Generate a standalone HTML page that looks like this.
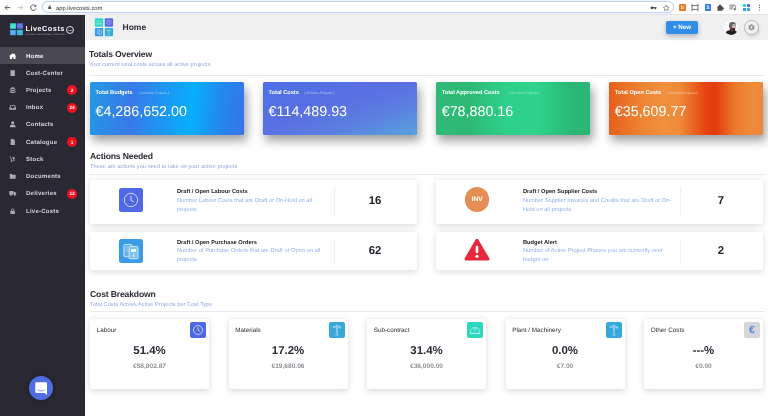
<!DOCTYPE html>
<html lang="en">
<head>
<meta charset="utf-8">
<title>LiveCosts - Home</title>
<style>
*{box-sizing:border-box;margin:0;padding:0}
html,body{width:768px;height:416px;overflow:hidden;background:#fff;font-family:"Liberation Sans",sans-serif;color:#2b2a35}
#wrap{position:absolute;left:0;top:0;width:768px;height:416px;will-change:transform;text-rendering:geometricPrecision}
.abs{position:absolute}
#chrome{position:absolute;left:0;top:0;width:768px;height:15px;background:#fff;border-bottom:1px solid #e4e4e6}
#url{position:absolute;left:42px;top:1px;width:632px;height:12px;border:.9px solid #bdd4f8;border-radius:6px;background:#fff;box-shadow:0 0 0 0.5px #e2ecfc}
#url span{position:absolute;left:13px;top:3.5px;font-size:5.85px;line-height:7px;color:#333;letter-spacing:0}
#side{position:absolute;left:0;top:15px;width:85px;height:401px;background:#2a2833}
#hdr{position:absolute;left:85px;top:15px;width:683px;height:25px;background:#f0f0f0}
.mi{position:absolute;left:0;width:85px;height:16.5px;color:#d2d2d9;font-size:6px;font-weight:bold;letter-spacing:.25px;line-height:19.7px;padding-left:26px}
.mi.on{background:#4a4952;color:#f4f4f7}
.mi svg{position:absolute;left:9.3px;top:5.2px;width:7.4px;height:6.5px;fill:#aaaab3}
.mi.on svg{fill:#fff;top:5.6px}
.mi.on{line-height:20.6px !important}
.bd{position:absolute;left:67px;top:3.5px;padding-top:1.5px;width:10px;height:10px;border-radius:50%;background:#f0101e;color:#fff;font-size:4.8px;line-height:10px;text-align:center;letter-spacing:-.1px}
h2{position:absolute;left:89px;font-size:8.6px;letter-spacing:-.15px;line-height:10px;margin-top:.4px;font-weight:bold;color:#2b2a35;white-space:nowrap}
.sub{position:absolute;left:89px;font-size:5.7px;line-height:6px;margin-top:1px;color:#8fa6dc;white-space:nowrap}
.hr{position:absolute;left:89px;width:676px;height:1px;background:#e9e9ec}
.tc{position:absolute;top:81.7px;width:153.9px;height:53px;border-radius:1.5px;box-shadow:2.5px 6px 9.5px rgba(10,10,15,.38);color:#fff}
.tc b{position:absolute;left:5.5px;top:8.45px;font-size:5.65px;line-height:7px;white-space:nowrap}
.tc i{position:absolute;top:9.15px;font-size:3.3px;line-height:4px;font-style:normal;opacity:.55;white-space:nowrap}
.tc em{position:absolute;left:5.5px;top:22.1px;font-size:14.3px;line-height:17px;font-style:normal;white-space:nowrap}
.ac{position:absolute;background:#fff;border-radius:2px;box-shadow:0 1.5px 6px rgba(20,20,30,.15)}
.ac .t{position:absolute;left:87px;margin-top:.87px;top:7.7px;font-size:5.7px;line-height:6px;font-weight:bold;color:#23222b;white-space:nowrap}
.ac .d{position:absolute;left:87px;margin-top:.9px;top:15.6px;width:152px;font-size:5.7px;line-height:9px;color:#8fb0e6}
.ac .v{position:absolute;left:244.3px;top:7px;width:1px;bottom:7px;background:#f0f0f3}
.ac .n{position:absolute;left:245px;width:80px;text-align:center;margin-top:.92px;top:13.5px;font-size:11.4px;line-height:13px;font-weight:bold;color:#23222b}
.cc{position:absolute;top:318.5px;width:119px;height:70.3px;background:#fff;border-radius:2px;box-shadow:0 1.5px 6px rgba(20,20,30,.16)}
.cc .l{position:absolute;left:6.7px;top:8.2px;font-size:6.3px;line-height:7px;color:#2b2a35;white-space:nowrap}
.cc .p{position:absolute;left:0;width:100%;text-align:center;top:26.3px;font-size:11.45px;line-height:13px;font-weight:bold;color:#2b2a35}
.cc .a{position:absolute;left:0;width:100%;text-align:center;top:45.5px;font-size:6.6px;line-height:6px;font-weight:bold;color:#8e8e96}
.cc .ic{position:absolute;left:100px;top:3.5px;width:16px;height:16px;border-radius:2px}
</style>
</head>
<body>
<div id="wrap">
<div id="chrome">
  <svg class="abs" style="left:0;top:0" width="42" height="15" viewBox="0 0 42 15">
    <path d="M10.2 7.6H5.3M7.4 5.3L5.1 7.6l2.3 2.3" stroke="#4a4a4f" stroke-width="0.9" fill="none"/>
    <path d="M17.6 7.6h4.9M20.4 5.3l2.3 2.3-2.3 2.3" stroke="#c2c2c6" stroke-width="0.9" fill="none"/>
    <path d="M35.6 6.2A2.7 2.7 0 1 0 35.9 8.6" stroke="#4a4a4f" stroke-width="0.9" fill="none"/>
    <path d="M36.3 4.5v2.2h-2.2z" fill="#4a4a4f"/>
  </svg>
  <div id="url">
    <svg class="abs" style="left:4.6px;top:3px" width="3.6" height="4.4" viewBox="0 0 5 6"><rect x="0.5" y="2.4" width="4" height="3.2" rx=".5" fill="#444"/><path d="M1.3 2.6V1.7a1.2 1.2 0 0 1 2.4 0v.9" stroke="#444" stroke-width=".7" fill="none"/></svg>
    <span>app.livecosts.com</span>
    <svg class="abs" style="left:603.5px;top:1px" width="30" height="10" viewBox="0 0 30 10">
      <circle cx="5" cy="4.8" r="1.4" fill="#444"/><rect x="5.5" y="4.2" width="4" height="1.2" fill="#444"/><rect x="8" y="5" width="1" height="1.3" fill="#444"/>
      <path d="M19.3 2l.9 1.9 2 .3-1.5 1.4.4 2-1.8-1-1.8 1 .4-2-1.5-1.4 2-.3z" stroke="#555" stroke-width=".6" fill="none"/>
    </svg>
  </div>
  <div class="abs" style="left:679px;top:4px;width:6.6px;height:7px;background:#f07a22;border-radius:1px;color:#fff;font-size:5px;line-height:8.4px;text-align:center;font-weight:bold">b</div>
  <svg class="abs" style="left:691px;top:3px" width="8" height="9" viewBox="0 0 8 9"><path d="M1 .8v7.4M7 .8v7.4M1 2.6h6M1 6.4h6" stroke="#50525a" stroke-width=".8" fill="none"/></svg>
  <div class="abs" style="left:704.5px;top:4px;width:6.8px;height:7px;background:#2b7de0;border-radius:1px;color:#fff;font-size:5px;line-height:8.6px;text-align:center;font-weight:bold">S</div>
  <svg class="abs" style="left:717px;top:4px" width="7" height="7" viewBox="0 0 7 7"><path d="M.5 2h1.6a1 1 0 1 1 1.8 0H5.5v1.6a1 1 0 1 1 0 1.8V6.8H.5z" fill="#4a4a50"/></svg>
  <svg class="abs" style="left:729px;top:4px" width="8" height="7" viewBox="0 0 8 7"><path d="M.5 1.2h5.5M.5 3h4M.5 4.8h3" stroke="#50525a" stroke-width=".8"/><circle cx="5.6" cy="5.2" r="1" fill="#50525a"/><path d="M6.4 5.2V1.5" stroke="#50525a" stroke-width=".6"/></svg>
  <div class="abs" style="left:743px;top:3.8px;width:3.4px;height:3.4px;border-radius:.6px;background:#2cdac6"></div><div class="abs" style="left:746.8px;top:3.8px;width:3.4px;height:3.4px;border-radius:.6px;background:#5868e6"></div><div class="abs" style="left:743px;top:7.6px;width:3.4px;height:3.4px;border-radius:.6px;background:#3a98e6"></div><div class="abs" style="left:746.8px;top:7.6px;width:3.4px;height:3.4px;border-radius:.6px;background:#38acd8"></div>
  <svg class="abs" style="left:758px;top:4px" width="3" height="8" viewBox="0 0 3 8"><circle cx="1.5" cy="1.2" r=".6" fill="#555"/><circle cx="1.5" cy="3.6" r=".6" fill="#555"/><circle cx="1.5" cy="6" r=".6" fill="#555"/></svg>
</div>

<div id="side">
  <!-- logo -->
  <svg class="abs" style="left:9px;top:7px" width="15" height="15" viewBox="0 0 15 15"><rect x=".95" y="1.2" width="6.2" height="5.6" rx=".6" fill="#2cdac6"/><rect x="7.85" y="1.2" width="6.15" height="5.6" rx=".6" fill="#5868e6"/><rect x=".95" y="7.65" width="6.2" height="5.6" rx=".6" fill="#3a98e6"/><rect x="7.85" y="7.65" width="6.15" height="5.6" rx=".6" fill="#38acd8"/><g fill="none" stroke="#fff" stroke-width=".4" opacity=".5"><path d="M2.4 5.2v-.6a1.6 1.6 0 0 1 3.2 0v.6zM2.1 5.3h3.9"/><circle cx="10.9" cy="4" r="1.5"/><rect x="2.5" y="9" width="1.8" height="2.6"/><rect x="3.6" y="9.8" width="1.8" height="2.6"/><path d="M10.9 8.8v3.6M10.2 12.4h1.4M9.3 9.7h3.2"/></g></svg>
  <div class="abs txt" style="left:25.5px;top:9.1px;font-size:7.3px;line-height:9px;font-weight:bold;color:#fff;letter-spacing:.5px;white-space:nowrap">LiveCosts</div>
  <div class="abs txt" style="left:25.6px;top:18.8px;font-size:2.3px;line-height:3px;color:#a2a2ae;letter-spacing:.1px;white-space:nowrap">AUTOMATED PROJECT CONTROL</div>
  <div class="abs txt" style="left:66.3px;top:11.2px;width:8px;height:8px;border:.55px solid #e0e0e6;border-radius:50%;color:#e8e8ee;font-size:2.1px;line-height:8.8px;text-align:center;font-weight:bold">.com</div>

  <div class="mi on" style="top:32.25px"><svg viewBox="0 0 8 7"><path d="M4 .2L0 3.6h1V6.8h2.2V4.6h1.6V6.8H7V3.6h1L6.6 2.4V.8H5.7v.9z"/></svg>Home</div>
  <div class="mi" style="top:49.50px"><svg viewBox="0 0 8 7"><path d="M1.6.2h4.8v6.6H1.6z"/></svg>Cost-Center</div>
  <div class="mi" style="top:66.75px"><svg viewBox="0 0 8 7"><path d="M4 0L7 1.2 4 2.4 1 1.2zM1 2.2l3 1.2 3-1.2v1.4L4 4.8 1 3.6zM1 4.4l3 1.2 3-1.2v1.4L4 7 1 5.8z"/></svg>Projects<span class="bd">2</span></div>
  <div class="mi" style="top:84.00px"><svg viewBox="0 0 8 7"><path d="M1.6 1h4.8L7.6 4v2.2H.4V4zM2.2 2L1.5 4h1.6l.4.9h1l.4-.9h1.6L5.8 2z"/></svg>Inbox<span class="bd">24</span></div>
  <div class="mi" style="top:101.25px"><svg viewBox="0 0 8 7"><circle cx="4" cy="2" r="1.7"/><path d="M1 6.8V5.6C1 4.6 2 4.1 4 4.1s3 .5 3 1.5v1.2z"/></svg>Contacts</div>
  <div class="mi" style="top:118.50px"><svg viewBox="0 0 8 7"><path d="M1.8 0h3L6.4 1.6V7H1.8z"/></svg>Catalogue<span class="bd">1</span></div>
  <div class="mi" style="top:135.75px"><svg viewBox="0 0 8 7"><path d="M.6.4l1.4.4 1.5 4.2 3.2-1 .2.7-3.6 1.2a.9.9 0 1 1-.7-.3L1.4 1.4.4 1.1zM3.6 1.6l2-.7.9 2.4-2 .7z"/></svg>Stock</div>
  <div class="mi" style="top:153.00px"><svg viewBox="0 0 8 7"><path d="M.8 1h2.4l.8.9h3.2v4.4H.8z"/></svg>Documents</div>
  <div class="mi" style="top:170.25px"><svg viewBox="0 0 8 7"><path d="M.3 1h4.6v4.2H.3zM5.2 2.2h1.5L7.8 3.6v1.6H5.2z"/><circle cx="1.9" cy="5.6" r=".9"/><circle cx="6.2" cy="5.6" r=".9"/></svg>Deliveries<span class="bd">13</span></div>
  <div class="mi" style="top:187.50px"><svg viewBox="0 0 8 7"><rect x="1.6" y="3" width="4.8" height="3.8" rx=".5"/><path d="M2.6 3.2V2.2a1.4 1.4 0 0 1 2.8 0v1" stroke="#aaaab3" stroke-width=".8" fill="none"/></svg>Live-Costs</div>

  <!-- chat bubble -->
  <div class="abs" style="left:29px;top:361px;width:24px;height:24px;border-radius:50%;background:#4f6fe0;box-shadow:0 0 6px rgba(0,0,0,.25)">
    <svg class="abs" style="left:5.8px;top:5.6px" width="12.4" height="13.2" viewBox="0 0 12.4 13.2"><path d="M1.6.3h9.2a1.3 1.3 0 0 1 1.3 1.3V13L9.4 11H1.6A1.3 1.3 0 0 1 .3 9.7V1.6A1.3 1.3 0 0 1 1.6.3z" fill="#fff"/><path d="M2.6 7.8c1.9 1.5 5.3 1.5 7.2 0" stroke="#4f6fe0" stroke-width=".7" fill="none"/></svg>
  </div>
</div>

<div id="hdr">
  <svg class="abs" style="left:9px;top:2px" width="21" height="21" viewBox="0 0 21 21"><rect x=".9" y="1.2" width="8.3" height="8.45" rx="1" fill="#2cdac6"/><rect x="10.75" y="1.2" width="8.3" height="8.45" rx="1" fill="#5868e6"/><rect x=".9" y="11.05" width="8.3" height="8.3" rx="1" fill="#3a98e6"/><rect x="10.75" y="11.05" width="8.3" height="8.3" rx="1" fill="#38acd8"/></svg>
  <svg class="abs" style="left:9.9px;top:3.2px;opacity:.55" width="18.1" height="18.2" viewBox="0 0 18.1 18.2" fill="none" stroke="#fff" stroke-width=".55">
    <path d="M1.8 5.9v-.9a2.3 2.3 0 0 1 4.6 0v.9zM1.4 6h5.4"/>
    <circle cx="13.9" cy="4.2" r="2.3"/><path d="M13.9 2.7v1.6h1.2"/>
    <rect x="2.3" y="11.8" width="2.6" height="3.8"/><rect x="3.9" y="12.9" width="2.6" height="3.8"/>
    <path d="M13.9 11.6v5.2M12.9 16.8h2M11.6 12.8h4.6M13.9 11.6l-1.8 1.2M13.9 11.6l1.8 1.2"/>
  </svg>
  <div class="abs txt" style="left:37.5px;top:7.1px;font-size:8.5px;line-height:11px;font-weight:bold;color:#2b2a35">Home</div>
  <div class="abs txt" style="left:581px;top:6px;width:32px;height:13px;border-radius:2px;background:#2f8fe8;box-shadow:0 2px 5px rgba(40,60,110,.35);color:#fff;font-size:6.2px;line-height:13.9px;text-align:center;font-weight:bold">+ New</div>
  <div class="abs" style="left:638.8px;top:5.1px;width:14.6px;height:14.6px;border-radius:50%;background:#fafafa;overflow:hidden">
    <div class="abs" style="left:5.7px;top:1.7px;width:6.6px;height:7px;border-radius:48%;background:#63636f"></div>
    <div class="abs" style="left:7.9px;top:3.6px;width:4.2px;height:4.7px;border-radius:45%;background:#e2cbbd"></div>
    <div class="abs" style="left:7.6px;top:4.9px;width:4.2px;height:.8px;background:#8a8088;opacity:.7"></div>
    <div class="abs" style="left:2.3px;top:9.6px;width:11.3px;height:5.2px;border-radius:50%;background:#1c1b22"></div>
    <div class="abs" style="left:6.6px;top:8.4px;width:4.6px;height:3.4px;border-radius:40%;background:#2a2930"></div>
    <div class="abs" style="left:7.3px;top:8px;width:2.1px;height:3.3px;border-radius:1px;background:#b3261e"></div>
  </div>
  <div class="abs" style="left:659px;top:5px;width:14.5px;height:14.5px;border-radius:50%;background:#f2f2f2;border:.6px solid #b6b6bb;box-shadow:1px 2px 3px rgba(0,0,0,.10)">
    <svg class="abs" style="left:3.3px;top:3.3px" width="7" height="7" viewBox="0 0 7 7"><path d="M3.5.3l.9.3.2.8.8.4.8-.3.5.8-.5.7v.9l.5.7-.5.8-.8-.3-.8.4-.2.8-.9.3-.9-.3-.2-.8-.8-.4-.8.3-.5-.8.5-.7v-.9l-.5-.7.5-.8.8.3.8-.4.2-.8z" fill="#8a8a97"/><circle cx="3.5" cy="3.5" r="1.15" fill="#f2f2f2"/></svg>
  </div>
</div>

<!-- Totals -->
<h2 style="top:48.5px">Totals Overview</h2>
<div class="sub" style="top:61px">Your current total costs across all active projects</div>
<div class="hr" style="top:75px"></div>

<div class="tc" style="left:90px;background:linear-gradient(96deg,#2299e4 0%,#3a79e8 27%,#2093f0 45%,#07affb 66%,#2388ee 84%,#3874e8 100%)"><b>Total Budgets</b><i style="left:49px">( All Active Projects )</i><em>€4,286,652.00</em></div>
<div class="tc" style="left:263.1px;background:linear-gradient(to bottom right,#4c6fe8 0%,#5a70e2 45%,#5b80e0 70%,#57a2dc 100%)"><b>Total Costs</b><i style="left:41px">( All Active Projects )</i><em>€114,489.93</em></div>
<div class="tc" style="left:436.2px;background:linear-gradient(90deg,#2fba78 0%,#2db874 20%,#2ed18b 47%,#2fd28c 66%,#2ab775 88%,#2bb877 100%)"><b>Total Approved Costs</b><i style="left:73px">( All Active Projects )</i><em>€78,880.16</em></div>
<div class="tc" style="left:609.3px;background:linear-gradient(90deg,#e85f1b 0%,#ee8435 22%,#f0903e 36%,#ee8a38 46%,#e4440f 63%,#e23a0c 69%,#ec7a2c 82%,#ef8c3c 92%,#ee8838 100%)"><b>Total Open Costs</b><i style="left:58px">( All Active Projects )</i><em>€35,609.77</em></div>

<!-- Actions -->
<h2 style="top:150.5px;left:90px">Actions Needed</h2>
<div class="sub" style="top:163px;left:90px">These are actions you need to take on your active projects</div>
<div class="hr" style="top:173.6px;left:90px;width:675px"></div>

<div class="ac" style="left:90px;top:180.3px;width:327px;height:44px">
  <div class="abs" style="left:29.2px;top:8px;width:24px;height:24px;border-radius:2.5px;background:#4f68e6">
    <svg class="abs" style="left:4px;top:4px" width="16" height="16" viewBox="0 0 16 16"><circle cx="8" cy="8" r="6.7" stroke="#e6ebff" stroke-width=".85" fill="none"/><path d="M8 3.8V8.3l2.9 1.6" stroke="#e6ebff" stroke-width=".85" fill="none"/></svg>
  </div>
  <div class="t">Draft / Open Labour Costs</div>
  <div class="d">Number Labour Costs that are Draft or On-Hold on all projects</div>
  <div class="v"></div><div class="n">16</div>
</div>
<div class="ac" style="left:436px;top:180.3px;width:327px;height:44px">
  <div class="abs txt" style="left:29px;top:7px;width:24.4px;height:24.4px;border-radius:50%;background:#e48e53;color:#fff;font-size:6.6px;line-height:26px;text-align:center;font-weight:bold">INV</div>
  <div class="t">Draft / Open Supplier Costs</div>
  <div class="d">Number Supplier Invoices and Credits that are Draft or On-Hold on all projects</div>
  <div class="v"></div><div class="n">7</div>
</div>
<div class="ac" style="left:90px;top:232px;width:327px;height:38px">
  <div class="abs" style="left:29.2px;top:6.5px;width:24px;height:24px;border-radius:2.5px;background:#3a9be6">
    <svg class="abs" style="left:4px;top:4px" width="17" height="17" viewBox="0 0 17 17"><rect x=".9" y="1.4" width="8.2" height="12.4" rx="1.2" stroke="#eaf5ff" stroke-width=".8" fill="#62b0ee"/><rect x="6.2" y="3.4" width="8.8" height="12.4" rx="1.2" stroke="#eaf5ff" stroke-width=".8" fill="#7cc0f3"/><rect x="8" y="6.2" width="5.2" height="2.6" fill="#fff"/><path d="M10.6 10.4v3.2M9.5 12.6l1.1 1.1 1.1-1.1" stroke="#fff" stroke-width=".7" fill="none"/><path d="M2.6 4h3M2.6 6h3M2.6 8h3" stroke="#cfe6fb" stroke-width=".6"/></svg>
  </div>
  <div class="t" style="top:7.4px">Draft / Open Purchase Orders</div>
  <div class="d" style="top:14px">Number of Purchase Orders that are Draft or Open on all projects</div>
  <div class="v"></div><div class="n" style="top:12px">62</div>
</div>
<div class="ac" style="left:436px;top:232px;width:327px;height:38px">
  <svg class="abs" style="left:28.4px;top:6.3px" width="26" height="24" viewBox="0 0 26 25" preserveAspectRatio="none"><path d="M13 2.6L23.8 21.8H2.2z" fill="#e8293c" stroke="#e8293c" stroke-width="3.4" stroke-linejoin="round"/><rect x="11.7" y="8" width="2.6" height="8" rx="1.3" fill="#fff"/><circle cx="13" cy="19" r="1.6" fill="#fff"/></svg>
  <div class="t" style="top:7.4px">Budget Alert</div>
  <div class="d" style="top:14px">Number of Active Project Phases you are currently over budget on</div>
  <div class="v"></div><div class="n" style="top:12px">2</div>
</div>

<!-- Cost breakdown -->
<h2 style="top:288.5px;left:90px">Cost Breakdown</h2>
<div class="sub" style="top:301px;left:90px">Total Costs Across Active Projects per Cost Type</div>
<div class="hr" style="top:311px;left:90px;width:675px"></div>

<div class="cc" style="left:90px"><div class="l">Labour</div><div class="ic" style="background:#4f68e6"><svg width="16" height="16" viewBox="0 0 16 16"><circle cx="8" cy="8" r="4.5" stroke="#e6ebff" stroke-width=".75" fill="none"/><path d="M8 5.2V8.2l1.9 1.1" stroke="#e6ebff" stroke-width=".75" fill="none"/></svg></div><div class="p">51.4%</div><div class="a">€58,802.87</div></div>
<div class="cc" style="left:228.5px"><div class="l">Materials</div><div class="ic" style="background:#35a8dc"><svg width="16" height="16" viewBox="0 0 16 16"><path d="M8 3v10M6.2 13h3.6M3.5 5.2h9M8 3L4.5 5.2M8 3l3.5 2.2M11 5.2v2M7.2 6.5h1.6M7.2 8.5h1.6M7.2 10.5h1.6" stroke="#e9f6fc" stroke-width=".6" fill="none" opacity=".85"/></svg></div><div class="p">17.2%</div><div class="a">€19,680.06</div></div>
<div class="cc" style="left:367px"><div class="l">Sub-contract</div><div class="ic" style="background:#2fd6c0"><svg width="16" height="16" viewBox="0 0 16 16"><path d="M3.5 11.3v-1.4a4.5 4.5 0 0 1 9 0v1.4zM2.8 11.5h10.4M6.6 5.7L8 8.4l1.4-2.7" stroke="#e9fcf9" stroke-width=".6" fill="none" opacity=".85"/></svg></div><div class="p">31.4%</div><div class="a">€36,000.00</div></div>
<div class="cc" style="left:505.5px"><div class="l">Plant / Machinery</div><div class="ic" style="background:#35a8dc"><svg width="16" height="16" viewBox="0 0 16 16"><path d="M8 3v10M6.2 13h3.6M3.5 5.2h9M8 3L4.5 5.2M8 3l3.5 2.2M11 5.2v2M7.2 6.5h1.6M7.2 8.5h1.6M7.2 10.5h1.6" stroke="#e9f6fc" stroke-width=".6" fill="none" opacity=".85"/></svg></div><div class="p">0.0%</div><div class="a">€7.00</div></div>
<div class="cc" style="left:644px"><div class="l">Other Costs</div><div class="ic txt" style="background:#d6d6da;color:#4f86d6;font-size:10.5px;line-height:17.6px;text-align:center;font-weight:bold;-webkit-text-stroke:0">€</div><div class="p">---%</div><div class="a">€0.00</div></div>

</div>
</body>
</html>
